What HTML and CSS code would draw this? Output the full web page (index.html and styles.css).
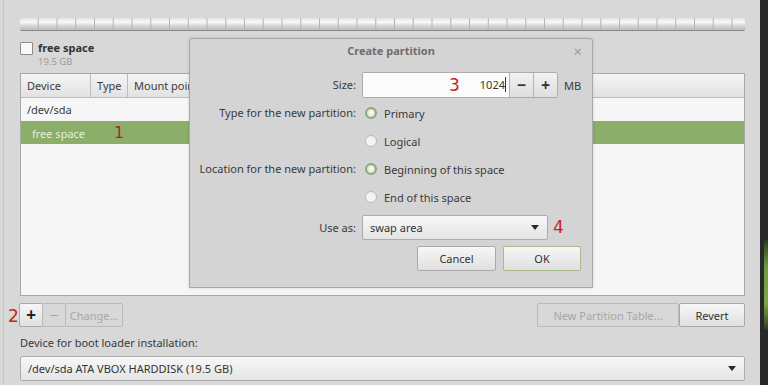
FILE: index.html
```html
<!DOCTYPE html>
<html lang="en">
<head>
    <meta charset="UTF-8">
    <title>Installation type</title>
    <link rel="stylesheet" href="styles.css">
</head>
<body>
    <div class="screen">
        <div class="window">
            <div class="part-bar"></div>

            <div class="legend">
                <span class="check"></span>
                <div class="legend-text">
                    <div class="legend-name">free space</div>
                    <div class="legend-size">19.5 GB</div>
                </div>
            </div>

            <div class="list">
                <div class="list-head">
                    <div class="col col-device">Device</div>
                    <div class="col col-type">Type</div>
                    <div class="col col-mount">Mount point</div>
                </div>
                <div class="list-row">/dev/sda</div>
                <div class="list-row selected">free space <span class="mark mark-1">1</span></div>
            </div>

            <div class="toolbar">
                <span class="mark mark-2">2</span>
                <div class="btn-group">
                    <button class="btn btn-icon btn-add">+</button>
                    <button class="btn btn-icon" disabled>&minus;</button>
                    <button class="btn btn-change" disabled>Change...</button>
                </div>
                <div class="btn-group-right">
                    <button class="btn btn-table" disabled>New Partition Table...</button>
                    <button class="btn btn-revert">Revert</button>
                </div>
            </div>

            <div class="boot-label">Device for boot loader installation:</div>
            <div class="combo combo-wide">
                <span>/dev/sda ATA VBOX HARDDISK (19.5 GB)</span>
                <span class="arrow"></span>
            </div>

            <!-- dialog sits on top of the window -->
            <div class="dialog">
                <div class="dialog-title">
                    Create partition
                    <span class="close">&times;</span>
                </div>
                <div class="dialog-grid">
                    <div class="lbl">Size:</div>
                    <div class="ctl">
                        <div class="spin">
                            <div class="spin-entry"><span class="mark mark-3">3</span>1024<span class="cursor"></span></div>
                            <button class="spin-btn">&minus;</button>
                            <button class="spin-btn">+</button>
                        </div>
                        <span class="unit">MB</span>
                    </div>

                    <div class="lbl">Type for the new partition:</div>
                    <div class="ctl"><span class="radio on"></span>Primary</div>

                    <div class="lbl"></div>
                    <div class="ctl"><span class="radio"></span>Logical</div>

                    <div class="lbl">Location for the new partition:</div>
                    <div class="ctl"><span class="radio on"></span>Beginning of this space</div>

                    <div class="lbl"></div>
                    <div class="ctl"><span class="radio"></span>End of this space</div>

                    <div class="lbl row-use">Use as:</div>
                    <div class="ctl row-use">
                        <div class="combo combo-use">
                            <span>swap area</span>
                            <span class="arrow"></span>
                        </div>
                        <span class="mark mark-4">4</span>
                    </div>
                </div>
                <div class="dialog-buttons">
                    <button class="btn btn-dlg">Cancel</button>
                    <button class="btn btn-dlg btn-ok">OK</button>
                </div>
            </div>
        </div>
        <div class="side">
            <div class="side-green"></div>
        </div>
    </div>
</body>
</html>
```

FILE: styles.css
```css
body {
    margin: 0;
    font-family: "Noto Sans", "Open Sans", sans-serif;
    font-size: 11px;
    color: #3a3a3a;
    background-color: #d8d8d8;
}
.screen {
    display: flex;
    width: 768px;
    height: 385px;
    overflow: hidden;
}
.window {
    position: relative;
    width: 760px;
    box-sizing: border-box;
    margin-left: 3px;
    padding: 18px 15px 0 16px;
    border-left: 1px solid #c6c6c6;
}
.side {
    width: 8px;
    background-color: #282828;
    padding-top: 240px;
}
.side-green {
    margin-left: 4px;
    height: 90px;
    background: linear-gradient(#2f3a22, #6c9a3a 30%, #7aa84a 70%, #2f3a22);
    border-radius: 3px 0 0 3px;
}
.part-bar {
    height: 12px;
    border-bottom: 1px solid #8a8a8a;
    border-radius: 2px;
    background-image:
        linear-gradient(90deg, transparent 18px, #b4b4b4 18px, #b4b4b4 19px, transparent 19px),
        linear-gradient(#e2e2e2, #fafafa 35%, #d6d6d6 65%, #bcbcbc);
    background-size: 18.75px 100%, 100% 100%;
}
.legend {
    display: flex;
    gap: 5px;
    margin-top: 10px;
    height: 32px;
}
.check {
    width: 11px;
    height: 11px;
    margin-top: 1px;
    background-color: #f8f8f8;
    border: 1px solid #8c8c8c;
    border-radius: 1px;
}
.legend-name {
    font-weight: bold;
    color: #333;
    line-height: 13px;
}
.legend-size {
    margin-top: 2px;
    font-size: 9.5px;
    color: #9a9a9a;
    line-height: 11px;
}
.list {
    height: 221px;
    background-color: #f6f6f6;
    border: 1px solid #a8a8a8;
}
.list-head {
    display: flex;
    height: 23px;
    border-bottom: 1px solid #bcbcbc;
    background: linear-gradient(#f4f4f4, #e2e2e2);
}
.col {
    padding-left: 6px;
    line-height: 23px;
    border-right: 1px solid #bcbcbc;
    white-space: nowrap;
    overflow: hidden;
}
.col-device { width: 63px; }
.col-type { width: 30px; }
.col-mount { flex: 1; border-right: none; }
.list-row {
    height: 23px;
    line-height: 23px;
    padding-left: 6px;
}
.list-row.selected {
    background-color: #8bae6b;
    color: #e4efd8;
    padding-left: 11px;
}
.mark {
    color: #c8221e;
    font-family: "DejaVu Sans", sans-serif;
    font-size: 16px;
}
.mark-1 {
    margin-left: 26px;
    color: #b3281c;
}
.toolbar {
    position: relative;
    display: flex;
    justify-content: space-between;
    margin-top: 7px;
    margin-left: -1px;
}
.mark-2 {
    position: absolute;
    left: -11px;
    top: 3px;
    font-size: 17px;
}
.btn-group, .btn-group-right {
    display: flex;
}
.btn {
    height: 24px;
    font-family: inherit;
    font-size: 11px;
    color: #333;
    padding: 0;
    border: 1px solid #a9a9a9;
    border-radius: 2px;
    background: linear-gradient(#f6f6f6, #e0e0e0);
}
.btn:disabled {
    color: #a6a6a6;
    background: #d8d8d8;
    border-color: #bababa;
}
.btn-icon {
    width: 24px;
    font-size: 15px;
    line-height: 20px;
}
.btn-add {
    font-size: 17px;
    font-weight: bold;
    color: #222;
}
.btn-group .btn + .btn {
    margin-left: -1px;
}
.btn-change { width: 58px; }
.btn-table { width: 142px; }
.btn-revert { width: 66px; }
.boot-label {
    margin-top: 7px;
    line-height: 18px;
}
.combo {
    display: flex;
    align-items: center;
    justify-content: space-between;
    box-sizing: border-box;
    height: 25px;
    padding: 0 8px 0 7px;
    border: 1px solid #acacac;
    border-radius: 2px;
    background: linear-gradient(#f8f8f8, #e4e4e4);
    color: #333;
}
.combo-wide {
    margin-top: 4px;
}
.arrow {
    width: 0;
    height: 0;
    border-left: 4px solid transparent;
    border-right: 4px solid transparent;
    border-top: 5px solid #2a2a2a;
}

/* dialog */
.dialog {
    position: absolute;
    left: 185px;
    top: 38px;
    width: 404px;
    height: 250px;
    box-sizing: border-box;
    background-color: #d4d4d4;
    border: 1px solid #a8a8a8;
    border-radius: 3px 3px 0 0;
    box-shadow: 0 0 3px rgba(0, 0, 0, 0.15);
}
.dialog-title {
    position: relative;
    height: 32px;
    line-height: 24px;
    text-align: center;
    font-weight: bold;
    color: #6e6e6e;
}
.close {
    position: absolute;
    right: 10px;
    top: 0;
    font-weight: normal;
    font-size: 15px;
    color: #9a9a9a;
}
.dialog-grid {
    display: grid;
    grid-template-columns: 166px 1fr;
    grid-auto-rows: 28px;
    column-gap: 6px;
}
.lbl {
    text-align: right;
    line-height: 28px;
    white-space: nowrap;
}
.ctl {
    display: flex;
    align-items: center;
}
.row-use {
    height: 33px;
    line-height: 33px;
}
.spin {
    display: flex;
    height: 24px;
    border: 1px solid #acacac;
    border-radius: 2px;
}
.spin-entry {
    position: relative;
    width: 143px;
    background-color: #fbfbfb;
    text-align: right;
    line-height: 24px;
    padding-right: 3px;
}
.cursor {
    display: inline-block;
    width: 1px;
    height: 15px;
    background-color: #333;
    vertical-align: -3px;
}
.mark-3 {
    position: absolute;
    left: 86px;
    top: 0;
    font-size: 17px;
    line-height: 24px;
}
.spin-btn {
    width: 24px;
    padding: 0;
    border: none;
    border-left: 1px solid #b4b4b4;
    background: linear-gradient(#f2f2f2, #dedede);
    font-family: inherit;
    font-size: 16px;
    font-weight: bold;
    color: #333;
}
.unit {
    margin-left: 6px;
}
.radio {
    box-sizing: border-box;
    width: 12px;
    height: 12px;
    margin: 0 7px 0 3px;
    border-radius: 50%;
    border: 1px solid #b8b8b8;
    background-color: #f4f4f4;
}
.radio.on {
    border: 2px solid #8fa877;
    background: radial-gradient(circle, #f6f6ee 0 2px, #d9e4cb 3px);
}
.combo-use {
    width: 186px;
}
.mark-4 {
    margin-left: 5px;
    font-size: 17px;
}
.dialog-buttons {
    display: flex;
    justify-content: flex-end;
    gap: 7px;
    padding: 7px 11px 0 0;
}
.btn-dlg {
    width: 79px;
    height: 25px;
}
.btn-ok {
    width: 78px;
    border-color: #a7bb8d;
}
```
